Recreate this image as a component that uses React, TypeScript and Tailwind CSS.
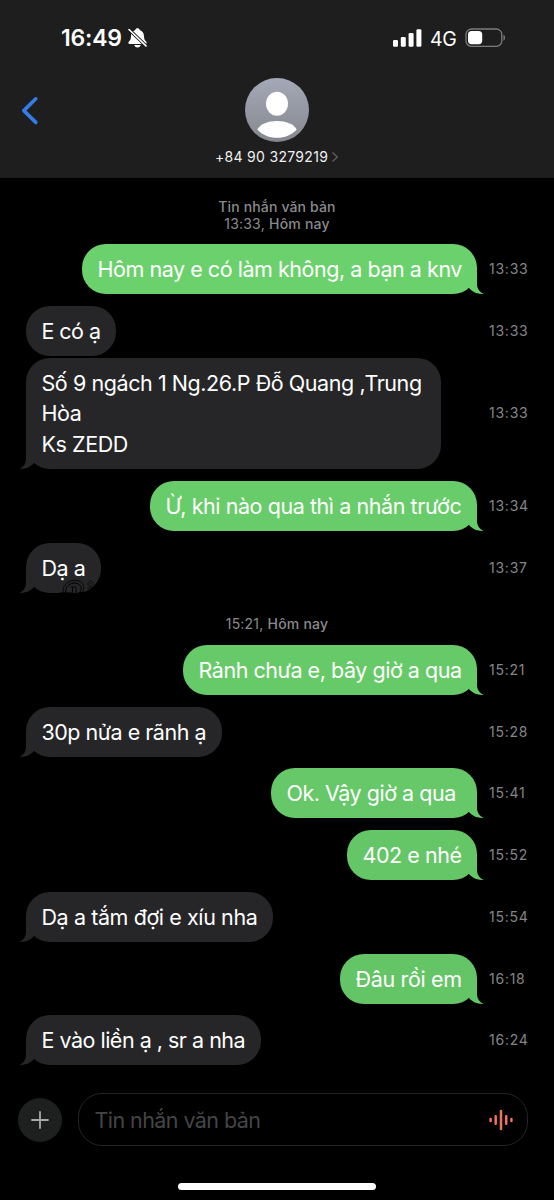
import React from "react";

type Message = {
    lines: string[];
    time: string;
    sent?: boolean;
    tail?: boolean;
    bubble: string;
    text?: string;
    gap: string;
    mark?: boolean;
};

const morning: Message[] = [
    { lines: ["Hôm nay e có làm không, a bạn a knv"], time: "13:33", sent: true, tail: true, bubble: "w-[395px] bg-[#6bd16c] text-[#6bd16c]", text: "tracking-[-0.46px]", gap: "mt-0" },
    { lines: ["E có ạ"], time: "13:33", bubble: "w-[90px]", text: "tracking-[-0.55px]", gap: "mt-3" },
    { lines: ["Số 9 ngách 1 Ng.26.P Đỗ Quang ,Trung", "Hòa", "Ks ZEDD"], time: "13:33", tail: true, bubble: "w-[415px]", text: "tracking-[-0.43px]", gap: "mt-0.5" },
    { lines: ["Ừ, khi nào qua thì a nhắn trước"], time: "13:34", sent: true, tail: true, bubble: "w-[327px] bg-[#69cc6a] text-[#69cc6a]", text: "tracking-[-0.43px]", gap: "mt-3" },
    { lines: ["Dạ a"], time: "13:37", tail: true, bubble: "w-[75px]", text: "tracking-[-0.5px]", gap: "mt-3", mark: true },
];

const afternoon: Message[] = [
    { lines: ["Rảnh chưa e, bây giờ a qua"], time: "15:21", sent: true, tail: true, bubble: "w-[294px] bg-[#67ca69] text-[#67ca69]", text: "tracking-[-0.46px]", gap: "mt-0" },
    { lines: ["30p nửa e rãnh ạ"], time: "15:28", tail: true, bubble: "w-[196px]", text: "tracking-[-0.5px]", gap: "mt-3" },
    { lines: ["Ok. Vậy giờ a qua"], time: "15:41", sent: true, tail: true, bubble: "w-[206px] bg-[#66c868] text-[#66c868]", text: "tracking-[-0.48px]", gap: "mt-[11px]" },
    { lines: ["402 e nhé"], time: "15:52", sent: true, tail: true, bubble: "w-[130px] bg-[#65c667] text-[#65c667]", text: "tracking-[-0.45px]", gap: "mt-3" },
    { lines: ["Dạ a tắm đợi e xíu nha"], time: "15:54", tail: true, bubble: "w-[247px]", text: "tracking-[-0.41px]", gap: "mt-3" },
    { lines: ["Đâu rồi em"], time: "16:18", sent: true, tail: true, bubble: "w-[137px] bg-[#64c566] text-[#64c566]", text: "tracking-[-0.33px]", gap: "mt-3" },
    { lines: ["E vào liền ạ , sr a nha"], time: "16:24", tail: true, bubble: "w-[235px]", text: "tracking-[-0.5px]", gap: "mt-[11px]" },
];

const Tail = ({ sent }: { sent?: boolean }) => (
    <svg
        viewBox="0 0 20 26"
        className={sent ? "absolute -right-[7px] bottom-0 h-[26px] w-5" : "absolute -left-[7px] bottom-0 h-[26px] w-5 -scale-x-100"}
    >
        <path d="M13 1V16C13 20.5 15.800 24.600 20 25.800C14.500 26.500 9.500 24.600 5.800 21L2 15V1Z" fill="currentColor" />
    </svg>
);

const BubbleMark = () => (
    <svg viewBox="0 0 36 14" className="absolute bottom-0 left-[34px] h-3.5 w-9" fill="none" stroke="#000" strokeWidth="0.9">
        <ellipse cx="13.5" cy="10" rx="10.5" ry="8.5" strokeDasharray="2.4 0.5" transform="rotate(-20 13.5 10)" />
        <ellipse cx="13.5" cy="10.5" rx="8" ry="6.3" transform="rotate(-20 13.5 10.5)" />
        <path d="M10.5 8h5.5M12.5 8v6M16 8.5v5.5" />
        <circle cx="30.5" cy="4.8" r="2.6" strokeDasharray="1.6 0.7" />
        <path d="M29.5 4.8h2M27.5 9.5l4-1M0 13.6h12M18 13.6h8" strokeDasharray="1.5 0.5" />
    </svg>
);

const MessageRow = ({ lines, time, sent, tail, bubble, text, gap, mark }: Message) => (
    <div className={`flex items-center justify-between px-[26px] ${gap}`}>
        <div className={sent ? "flex w-[451px] justify-end" : "flex w-[451px]"}>
            <div
                className={`relative shrink-0 rounded-[24px] px-[15.5px] py-[10px] text-[21.5px] ${lines.length > 1 ? "leading-[30.4px]" : "leading-[30px]"} ${sent ? "" : "bg-[#262628] text-[#262628]"} ${bubble}`}
            >
                {tail && <Tail sent={sent} />}
                {mark && <BubbleMark />}
                {lines.map((line) => (
                    <p key={line} className={`relative whitespace-nowrap text-white ${text}`}>
                        {line}
                    </p>
                ))}
            </div>
        </div>
        <span className="w-[39px] whitespace-nowrap pb-[2px] text-[14px] tracking-[0.75px] text-[#858587]">{time}</span>
    </div>
);

const StatusBar = () => (
    <div className="flex h-[76px] items-center justify-between pl-[61px] pr-[48px]">
        <div className="flex items-center gap-[5px] text-white">
            <span className="w-[62px] text-[23px] font-semibold tracking-[-0.2px]">16:49</span>
            <svg viewBox="0 0 20 20" className="size-5">
                <path
                    d="M9.500 0.300c1.200 0 2 .6 2.200 1.700 2.700.9 4.200 3 4.300 5.900.1 2.700.5 4 1.800 5.400.7.800 1 1.200.8 1.900-.2.600-.7.800-1.400.8H1.800c-.7 0-1.200-.2-1.400-.8-.2-.7.100-1.100.8-1.900C2.500 11.900 2.900 10.600 3 7.900c.1-2.900 1.600-5 4.300-5.900C7.500.9 8.300.3 9.500.3ZM6.300 17h6.400c-.4 1.600-1.500 2.500-3.200 2.500S6.700 18.600 6.300 17Z"
                    fill="#fff"
                />
                <path d="M0 0.500L20 19.800" stroke="#1e1e1e" strokeWidth="3.400" />
                <path d="M1 1.500L18 17.900" stroke="#fff" strokeWidth="1.600" strokeLinecap="round" />
            </svg>
        </div>
        <div className="flex items-center text-white">
            <svg viewBox="0 0 29 18" className="h-[18px] w-[29px]" fill="#fff">
                <rect x="0" y="11" width="5" height="6.700" rx="1.300" />
                <rect x="7.800" y="8" width="5" height="9.700" rx="1.300" />
                <rect x="15.600" y="4" width="5" height="13.700" rx="1.300" />
                <rect x="23.400" y="0.300" width="5" height="17.400" rx="1.300" />
            </svg>
            <span className="ml-2 mt-[3px] w-[27px] text-[19.5px] tracking-[-0.3px]">4G</span>
            <svg viewBox="0 0 41 20" className="ml-2 h-5 w-[41px]">
                <rect x="1" y="1" width="35.800" height="17.400" rx="5.500" fill="none" stroke="#7c7c7c" strokeWidth="1.300" />
                <rect x="3" y="3" width="14.200" height="13.200" rx="3.600" fill="#fff" />
                <path d="M38.500 6.800c2 .8 2 5.200 0 6Z" fill="#7c7c7c" />
            </svg>
        </div>
    </div>
);

const Header = () => (
    <header className="relative h-[178px] bg-[#1e1e1e]">
        <StatusBar />
        <svg viewBox="0 0 18 30" className="absolute left-[21px] top-[96px] h-[30px] w-[18px]">
            <path d="M14.800 2.800L2.800 14.600L14.800 26.400" fill="none" stroke="#357ce8" strokeWidth="3.600" strokeLinecap="round" strokeLinejoin="round" />
        </svg>
        <div className="flex flex-col items-center pt-[2px]">
            <svg viewBox="0 0 64 64" className="size-16">
                <defs>
                    <linearGradient id="avatar" x1="0" y1="0" x2="0" y2="1">
                        <stop offset="0" stopColor="#a5a9b7" />
                        <stop offset="1" stopColor="#85888f" />
                    </linearGradient>
                </defs>
                <circle cx="32" cy="32" r="32" fill="url(#avatar)" />
                <ellipse cx="32" cy="25.800" rx="11" ry="12" fill="#fff" />
                <path d="M12.300 51.400C15.500 46 23 43 32 43s16.500 3 19.700 8.400C46.500 57 39.800 59.800 32 59.800S17.500 57 12.300 51.400Z" fill="#fff" />
            </svg>
            <div className="mt-[5px] flex items-center text-[14px] leading-5 text-[#f0f0f0]">
                <span className="w-[113px] whitespace-nowrap tracking-[0.3px]">+84 90 3279219</span>
                <svg viewBox="0 0 8 12" className="ml-[3px] h-3 w-2">
                    <path d="M1.500 1.500L6.300 6L1.500 10.500" fill="none" stroke="#626265" strokeWidth="1.200" />
                </svg>
            </div>
        </div>
    </header>
);

const Composer = () => (
    <footer className="mt-7 flex items-center pl-[18px] pr-[26px]">
        <div className="flex size-11 items-center justify-center rounded-full bg-[#1e201f]">
            <svg viewBox="0 0 18 18" className="size-[18px]">
                <path d="M9 1v16M1 9h16" stroke="#a8a8a8" strokeWidth="1.800" strokeLinecap="round" />
            </svg>
        </div>
        <div className="ml-[15.5px] flex h-[53px] flex-1 items-center justify-between rounded-[24px] border border-[#242426] pl-[16px] pr-[14.5px]">
            <span className="pt-[2px] text-[21.5px] tracking-[-0.57px] text-[#454547]">Tin nhắn văn bản</span>
            <svg viewBox="0 0 24 22" className="h-[22px] w-6" stroke="#f0745a" strokeWidth="2.500" strokeLinecap="round">
                <path d="M1.600 10v2M6.700 7.300v7.400M12 2v18M17.200 7.300v7.400M22.400 10v2" />
            </svg>
        </div>
    </footer>
);

const App = () => {
    return (
        <div className="flex h-[1200px] w-[554px] flex-col overflow-hidden bg-black font-['Inter','Noto_Sans',sans-serif]">
            <Header />
            <main className="pt-[21px]">
                <div className="h-[45px] text-center text-[14px] leading-[16.5px] text-[#8a8a8d]">
                    <p className="font-medium tracking-[0.15px]">Tin nhắn văn bản</p>
                    <p className="tracking-[0.2px]">
                        13:33, <span className="font-medium">Hôm nay</span>
                    </p>
                </div>
                {morning.map((message, i) => (
                    <MessageRow key={i} {...message} />
                ))}
                <p className="flex h-[51.8px] items-center justify-center pt-[8px] text-[14px] tracking-[0.2px] text-[#8a8a8d]">
                    15:21,&nbsp;<span className="font-medium">Hôm nay</span>
                </p>
                {afternoon.map((message, i) => (
                    <MessageRow key={i} {...message} />
                ))}
            </main>
            <Composer />
            <div className="mx-auto mt-[37px] h-[7px] w-[198px] shrink-0 rounded-full bg-white" />
        </div>
    );
};

export default App;
